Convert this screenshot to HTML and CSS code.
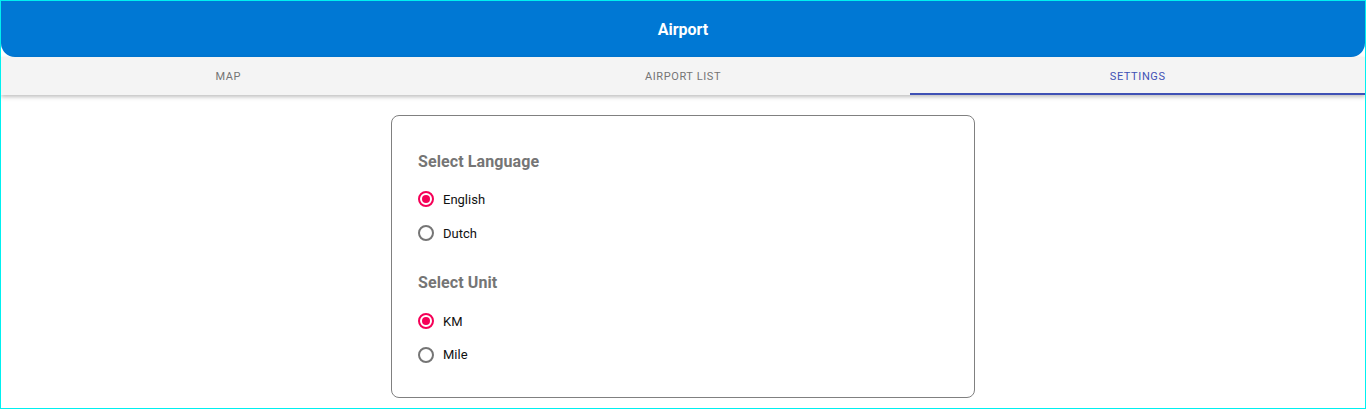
FILE: index.html
```html
<!DOCTYPE html>
<html>
<head>
<meta charset="utf-8">
<link rel="stylesheet" href="styles.css">
</head>
<body>
<div class="frame">
  <header class="appbar">Airport</header>
  <nav class="tabs">
    <div class="tab">Map</div>
    <div class="tab">Airport List</div>
    <div class="tab active">Settings</div>
  </nav>
  <main class="content">
    <section class="card">
      <h2 class="group-title">Select Language</h2>
      <div class="radio-row"><span class="radio checked"></span><span class="label">English</span></div>
      <div class="radio-row"><span class="radio"></span><span class="label">Dutch</span></div>
      <h2 class="group-title second">Select Unit</h2>
      <div class="radio-row"><span class="radio checked"></span><span class="label">KM</span></div>
      <div class="radio-row"><span class="radio"></span><span class="label">Mile</span></div>
    </section>
  </main>
</div>
</body>
</html>
```
FILE: styles.css
```css
* { box-sizing: border-box; }
html, body { margin: 0; padding: 0; background: #fff; }
body { font-family: Roboto, "Liberation Sans", sans-serif; }
.frame {
  width: 1366px;
  height: 409px;
  border: 1px solid #00f0f0;
  overflow: hidden;
  display: flex;
  flex-direction: column;
}
.appbar {
  height: 56px;
  background: #0078d4;
  color: #fff;
  font-size: 16px;
  font-weight: 700;
  display: flex;
  align-items: center;
  justify-content: center;
  border-radius: 0 0 14px 14px;
  flex: none;
}
.tabs {
  height: 38px;
  background: #f4f4f4;
  display: flex;
  box-shadow: 0 2px 4px rgba(0,0,0,0.25);
  flex: none;
  position: relative;
  z-index: 1;
}
.tab {
  flex: 1;
  display: flex;
  align-items: center;
  justify-content: center;
  font-size: 11px;
  text-transform: uppercase;
  letter-spacing: 0.6px;
  color: #757575;
  border-bottom: 2px solid transparent;
  padding-top: 2px;
}
.tab.active {
  color: #3f51b5;
  border-bottom-color: #3f51b5;
}
.content {
  flex: 1;
  display: flex;
  justify-content: center;
  padding-top: 20px;
}
.card {
  width: 584px;
  height: 283px;
  border: 1px solid #808080;
  border-radius: 8px;
  padding: 35px 26px 0;
}
.group-title {
  margin: 0 0 9px;
  font-size: 16px;
  font-weight: 700;
  color: #757575;
  line-height: 22px;
  letter-spacing: 0.1px;
}
.group-title.second { margin-top: 22px; margin-bottom: 10px; }
.radio-row {
  display: flex;
  align-items: center;
  height: 34px;
}
.radio-row:last-child { height: 33px; }
.radio {
  width: 16px;
  height: 16px;
  border: 2px solid #757575;
  border-radius: 50%;
  margin-right: 9px;
  display: flex;
  align-items: center;
  justify-content: center;
}
.radio.checked { border-color: #f50057; }
.radio.checked::after {
  content: "";
  width: 8px;
  height: 8px;
  border-radius: 50%;
  background: #f50057;
}
.label {
  font-size: 13px;
  color: #111;
}
```
